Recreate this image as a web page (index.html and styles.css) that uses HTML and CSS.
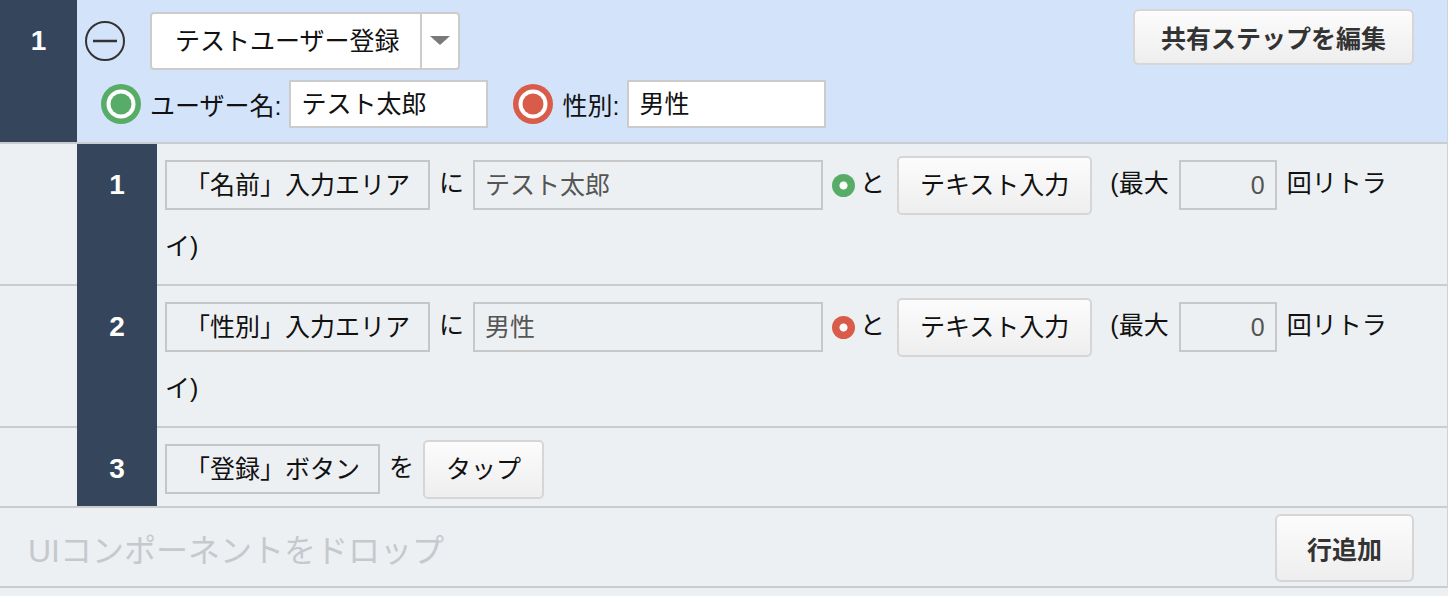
FILE: index.html
```html
<!DOCTYPE html>
<html lang="ja">

<head>
    <meta charset="UTF-8">
    <meta name="viewport" content="width=device-width, initial-scale=1.0">
    <title>シナリオ編集</title>
    <link rel="stylesheet" href="styles.css">
</head>

<body>

    <div class="scenario">

        <!-- 共有ステップ -->
        <div class="group-head">
            <div class="num">1</div>
            <div class="head-body">
                <div class="head-left">
                    <div class="head-line">
                        <svg class="toggle" width="40" height="40" viewBox="0 0 40 40">
                            <circle cx="20" cy="20" r="19" fill="none" stroke="#333" stroke-width="2"/>
                            <line x1="8" y1="20" x2="32" y2="20" stroke="#333" stroke-width="2.5"/>
                        </svg>
                        <div class="select">
                            <span class="select-text">テストユーザー登録</span>
                            <span class="select-arrow">
                                <svg width="20" height="10" viewBox="0 0 20 10">
                                    <polygon points="0,0 20,0 10,9" fill="#7a7a7a"/>
                                </svg>
                            </span>
                        </div>
                    </div>
                    <div class="head-line params">
                        <svg class="param-icon" width="40" height="40" viewBox="0 0 40 40">
                            <circle cx="20" cy="20" r="20" fill="#57ad68"/>
                            <circle cx="20" cy="20" r="14.5" fill="#fff"/>
                            <circle cx="20" cy="20" r="10.5" fill="#57ad68"/>
                        </svg>
                        <span class="param-label">ユーザー名:</span>
                        <span class="param-input">テスト太郎</span>
                        <svg class="param-icon second" width="40" height="40" viewBox="0 0 40 40">
                            <circle cx="20" cy="20" r="20" fill="#d95b4a"/>
                            <circle cx="20" cy="20" r="14.5" fill="#fff"/>
                            <circle cx="20" cy="20" r="10.5" fill="#d95b4a"/>
                        </svg>
                        <span class="param-label">性別:</span>
                        <span class="param-input">男性</span>
                    </div>
                </div>
                <button class="btn edit-btn">共有ステップを編集</button>
            </div>
        </div>

        <!-- ステップ一覧 -->
        <div class="steps">
            <div class="step">
                <div class="step-indent"></div>
                <div class="step-num">1</div>
                <div class="step-body"><span class="target-box">「名前」入力エリア</span><span class="particle">に</span><span class="value-box wide">テスト太郎</span><span class="dot green"></span><span class="particle to">と</span><span class="btn action">テキスト入力</span><span class="retry">(最大</span><span class="value-box count">0</span>回リトライ)</div>
            </div>
            <div class="step">
                <div class="step-indent"></div>
                <div class="step-num">2</div>
                <div class="step-body"><span class="target-box">「性別」入力エリア</span><span class="particle">に</span><span class="value-box wide">男性</span><span class="dot red"></span><span class="particle to">と</span><span class="btn action">テキスト入力</span><span class="retry">(最大</span><span class="value-box count">0</span>回リトライ)</div>
            </div>
            <div class="step">
                <div class="step-indent"></div>
                <div class="step-num">3</div>
                <div class="step-body"><span class="target-box">「登録」ボタン</span><span class="particle">を</span><span class="btn action">タップ</span></div>
            </div>
        </div>

        <div class="drop-row">
            <span class="drop-hint">UIコンポーネントをドロップ</span>
            <button class="btn add-btn">行追加</button>
        </div>

    </div>

</body>

</html>
```

FILE: styles.css
```css
* {
    box-sizing: border-box;
}

body, html {
    margin: 0;
    padding: 0;
    background: #edf0f2;
    color: #111;
    font-family: "Liberation Sans", "Noto Sans CJK JP", sans-serif;
    font-size: 25px;
}

.scenario {
    border-right: 1px solid #cfd2d6;
}

/* 共有ステップのヘッダー */
.group-head {
    display: flex;
    background-color: #d3e3fa;
    border-bottom: 2px solid #c9ccd0;
}

.group-head .num {
    width: 77px;
    flex-shrink: 0;
    background-color: #35465c;
    color: white;
    font-weight: bold;
    font-size: 28px;
    text-align: center;
    padding-top: 12px;
    line-height: 58px;
}

.head-body {
    flex: 1;
    display: flex;
    justify-content: space-between;
    align-items: flex-start;
    padding: 9px 33px 14px 8px;
}

.head-left {
    flex-shrink: 0;
}

.head-line {
    display: flex;
    align-items: center;
    height: 58px;
    margin-top: 3px;
}

.toggle {
    margin-right: 25px;
    flex-shrink: 0;
}

.select {
    display: flex;
    flex-shrink: 0;
    width: 310px;
    height: 58px;
    background-color: white;
    border: 2px solid #cccccc;
    border-radius: 4px;
}

.select-text {
    width: 270px;
    flex-shrink: 0;
    padding-left: 23px;
    line-height: 54px;
    border-right: 2px solid #cccccc;
}

.select-arrow {
    flex: 1;
    display: flex;
    align-items: center;
    justify-content: center;
}

.head-line.params {
    height: 48px;
    margin-top: 10px;
    padding-left: 16px;
}

.param-label {
    margin-left: 9px;
}

.param-input {
    width: 199px;
    height: 48px;
    line-height: 44px;
    margin-left: 8px;
    padding: 0 10px;
    background-color: white;
    border: 2px solid #cccccc;
}

.param-icon.second {
    margin-left: 25px;
}

/* ボタン */
.btn {
    font-family: inherit;
    font-size: 25px;
    color: #111;
    border: 2px solid #d6d6d6;
    border-radius: 5px;
    background: linear-gradient(#fcfcfc, #eeeeee);
    cursor: pointer;
}

.edit-btn, .add-btn {
    font-weight: bold;
    color: #333;
    border-radius: 6px;
}

.edit-btn {
    height: 56px;
    padding: 0 26px;
}

.add-btn {
    height: 68px;
    padding: 0 30px;
}

/* ステップ行 */
.step {
    display: flex;
}

.step-indent {
    width: 77px;
    border-bottom: 2px solid #c9ccd0;
}

.step-num {
    width: 80px;
    background-color: #35465c;
    color: white;
    font-weight: bold;
    font-size: 28px;
    text-align: center;
    padding-top: 10px;
    line-height: 62px;
}

.step:last-child .step-num {
    border-bottom: 2px solid #c9ccd0;
}

.step-body {
    flex: 1;
    padding: 8px 48px 7px 8px;
    line-height: 62px;
    border-bottom: 2px solid #c9ccd0;
}

.target-box {
    display: inline-block;
    vertical-align: middle;
    height: 50px;
    line-height: 46px;
    padding: 0 18px;
    border: 2px solid #c6c6c6;
}

.particle {
    margin: 0 9px;
}

.particle.to {
    margin: 0 12px 0 5px;
}

.value-box {
    display: inline-block;
    vertical-align: middle;
    height: 50px;
    line-height: 46px;
    padding: 0 10px;
    color: #555;
    border: 2px solid #c8c8c8;
}

.value-box.wide {
    width: 350px;
}

.value-box.count {
    width: 98px;
    margin: 0 10px;
    text-align: right;
}

.dot {
    display: inline-block;
    vertical-align: middle;
    width: 23px;
    height: 23px;
    margin-left: 9px;
    border-radius: 50%;
}

.dot.green {
    background: radial-gradient(circle, #fff 0 3.5px, #57ad68 4.5px);
}

.dot.red {
    background: radial-gradient(circle, #fff 0 3.5px, #d95b4a 4.5px);
}

.btn.action {
    display: inline-block;
    vertical-align: middle;
    height: 59px;
    line-height: 55px;
    padding: 0 21px;
}

.retry {
    margin-left: 18px;
}

/* ドロップ領域 */
.drop-row {
    display: flex;
    justify-content: space-between;
    align-items: center;
    padding: 6px 33px 4px 28px;
    border-bottom: 2px solid #c9ccd0;
}

.drop-hint {
    color: #c5c9cd;
    font-size: 32px;
}
```
